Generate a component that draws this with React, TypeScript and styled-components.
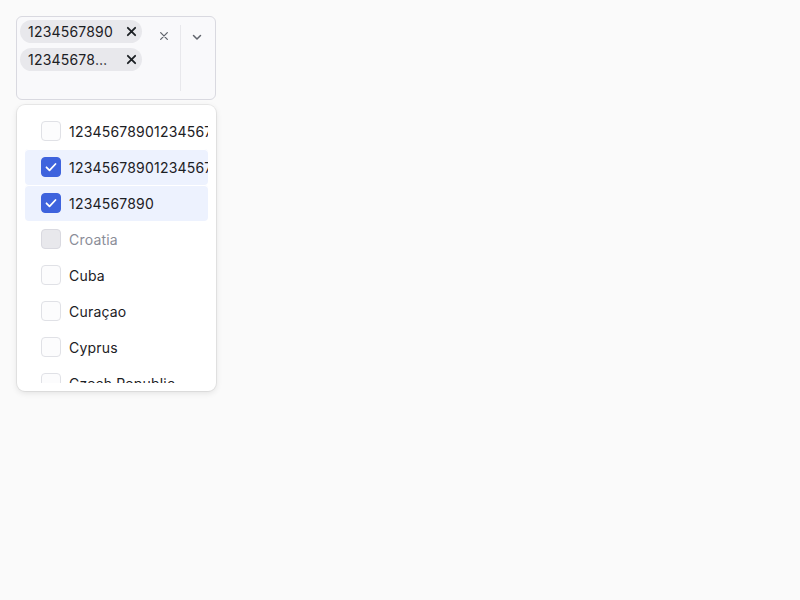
import React from 'react';
import styled, { createGlobalStyle } from 'styled-components';

const GlobalStyle = createGlobalStyle`
  body {
    margin: 0;
    background: #fafafa;
    font-family: Inter, "Noto Sans", sans-serif;
    color: #1c2024;
  }
`;

const Page = styled.div`
  padding: 16px;
  width: 200px;
`;

const Control = styled.div`
  display: flex;
  box-sizing: border-box;
  width: 200px;
  min-height: 84px;
  border: 1px solid #d9d9e0;
  border-radius: 6px;
  background: #f9f9fb;
`;

const ValueArea = styled.div`
  flex: 1;
  display: flex;
  flex-direction: column;
  align-items: flex-start;
  gap: 5px;
  padding: 3px;
  min-width: 0;
`;

const Chip = styled.div`
  display: flex;
  align-items: center;
  box-sizing: border-box;
  width: 122px;
  height: 23px;
  padding: 0 5px 0 8px;
  border-radius: 12px;
  background: #e8e8ec;
  font-size: 14px;
  letter-spacing: 0.2px;
  line-height: 23px;
`;

const ChipLabel = styled.span`
  flex: 1;
  white-space: nowrap;
  overflow: hidden;
  text-overflow: ellipsis;
`;

const ChipRemove = styled.span`
  display: flex;
  margin-left: 10px;
  color: #1c2024;
`;

const Indicators = styled.div`
  display: flex;
  align-items: stretch;
  padding: 8px 2px 8px 0;
`;

const IndicatorButton = styled.div`
  display: flex;
  align-items: flex-start;
  justify-content: center;
  width: 32px;
  padding-top: 6px;
  color: #60646c;
`;

const Separator = styled.div`
  width: 1px;
  background: #e8e8ec;
`;

const Menu = styled.div`
  margin-top: 5px;
  box-sizing: border-box;
  width: 199px;
  margin-left: 1px;
  padding: 8px;
  border-radius: 8px;
  background: #fff;
  box-shadow: 0 0 0 1px rgba(0, 0, 0, 0.06), 0 2px 6px rgba(0, 0, 0, 0.1);
`;

const MenuList = styled.div`
  height: 270px;
  overflow: hidden;
  display: flex;
  flex-direction: column;
`;

const Option = styled.div<{ $selected?: boolean; $disabled?: boolean }>`
  display: flex;
  align-items: center;
  flex-shrink: 0;
  gap: 8px;
  height: 36px;
  padding-left: 16px;
  border-radius: 4px;
  box-shadow: ${({ $selected }) => ($selected ? 'inset 0 1px 0 #fff' : 'none')};
  background: ${({ $selected }) => ($selected ? '#edf2fe' : 'transparent')};
  color: ${({ $disabled }) => ($disabled ? '#8b8d98' : '#1c2024')};
  font-size: 14px;
  letter-spacing: 0.2px;
  white-space: nowrap;
  overflow: hidden;
`;

const Checkbox = styled.span<{ $checked?: boolean; $disabled?: boolean }>`
  display: flex;
  align-items: center;
  justify-content: center;
  flex-shrink: 0;
  box-sizing: border-box;
  width: 20px;
  height: 20px;
  border-radius: 4px;
  border: 1px solid
    ${({ $checked, $disabled }) =>
      $checked ? '#3e63dd' : $disabled ? '#d9d9e0' : '#e0e1e6'};
  background: ${({ $checked, $disabled }) =>
    $checked ? '#3e63dd' : $disabled ? '#e8e8ec' : '#fcfcfd'};
  color: #fff;
`;

const Cross = ({ size, width }: { size: number; width: number }) => (
  <svg width={size} height={size} viewBox="0 0 12 12" fill="none" stroke="currentColor" strokeWidth={width} strokeLinecap="round">
    <path d="M2 2l8 8M10 2l-8 8" />
  </svg>
);

const Chevron = () => (
  <svg width="12" height="12" viewBox="0 0 12 12" fill="none" stroke="currentColor" strokeWidth="1.5" strokeLinecap="round" strokeLinejoin="round">
    <path d="M2.5 4.5L6 8l3.5-3.5" />
  </svg>
);

const Check = () => (
  <svg width="14" height="14" viewBox="0 0 14 14" fill="none" stroke="currentColor" strokeWidth="1.8" strokeLinecap="round" strokeLinejoin="round">
    <path d="M2.5 7.3l3 3 6-6.3" />
  </svg>
);

const options = [
  { label: '1234567890123456789012345', checked: false },
  { label: '1234567890123456789012345', checked: true },
  { label: '1234567890', checked: true },
  { label: 'Croatia', disabled: true },
  { label: 'Cuba' },
  { label: 'Curaçao' },
  { label: 'Cyprus' },
  { label: 'Czech Republic' },
];

const App: React.FC = () => {
  return (
    <Page>
      <GlobalStyle />
      <Control>
        <ValueArea>
          <Chip>
            <ChipLabel>1234567890</ChipLabel>
            <ChipRemove>
              <Cross size={11} width={2} />
            </ChipRemove>
          </Chip>
          <Chip>
            <ChipLabel>1234567890123456789012345</ChipLabel>
            <ChipRemove>
              <Cross size={11} width={2} />
            </ChipRemove>
          </Chip>
        </ValueArea>
        <Indicators>
          <IndicatorButton>
            <Cross size={10} width={1.5} />
          </IndicatorButton>
          <Separator />
          <IndicatorButton>
            <Chevron />
          </IndicatorButton>
        </Indicators>
      </Control>
      <Menu>
        <MenuList>
          {options.map((o, i) => (
            <Option key={i} $selected={o.checked} $disabled={o.disabled}>
              <Checkbox $checked={o.checked} $disabled={o.disabled}>
                {o.checked && <Check />}
              </Checkbox>
              {o.label}
            </Option>
          ))}
        </MenuList>
      </Menu>
    </Page>
  );
};

export default App;
